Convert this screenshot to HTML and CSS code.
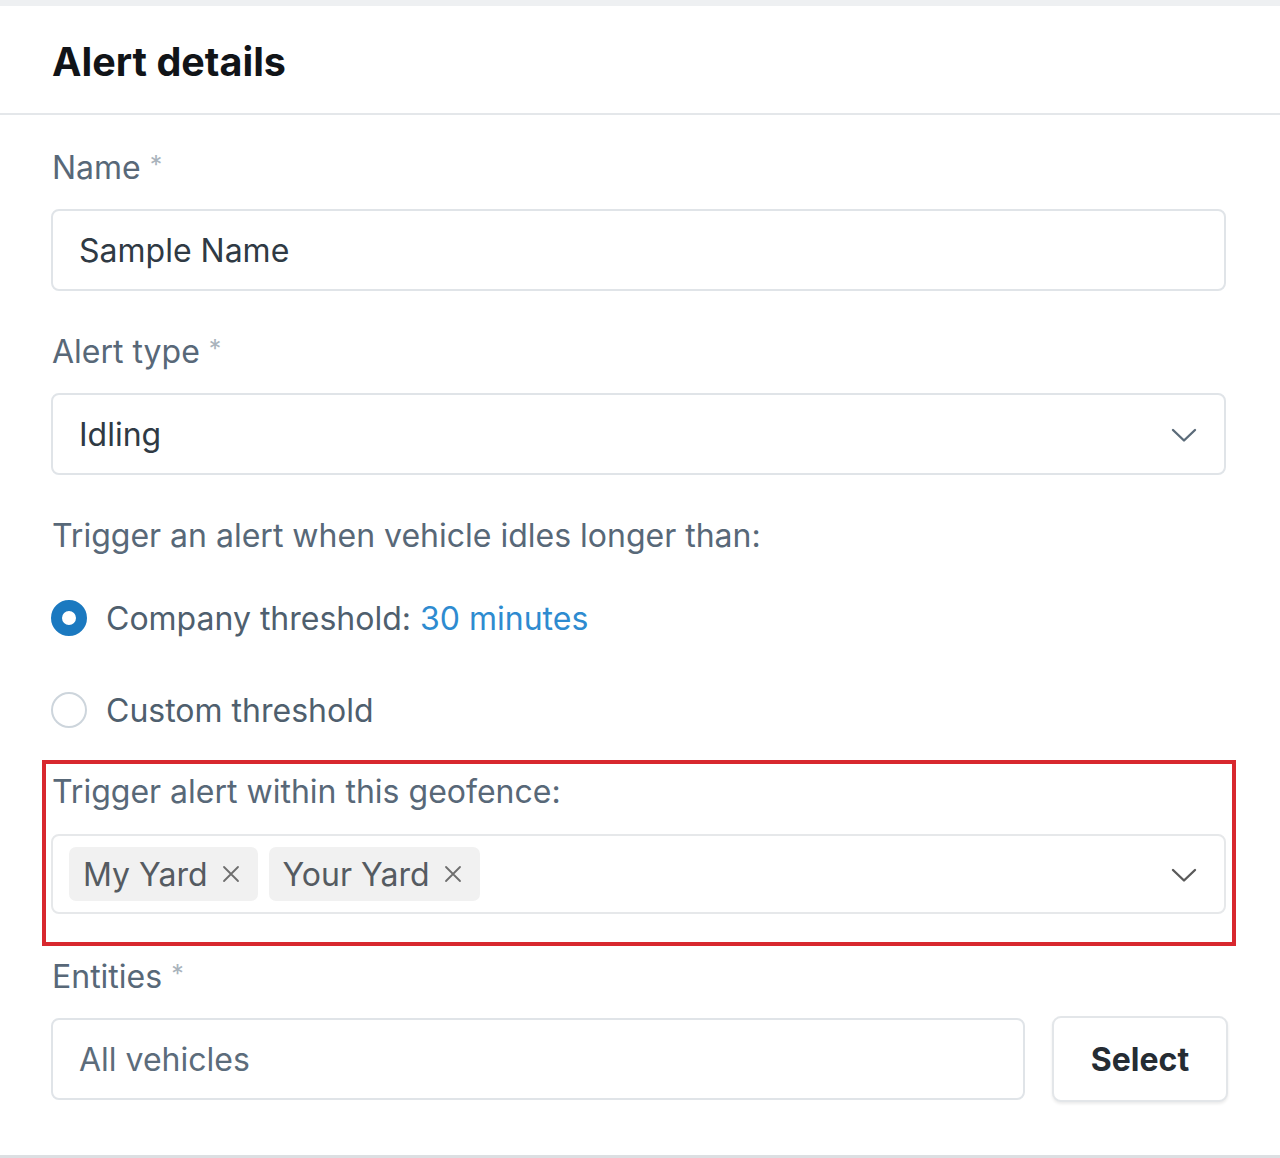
FILE: index.html
```html
<!DOCTYPE html>
<html>
<head>
<meta charset="utf-8">
<link rel="stylesheet" href="styles.css">
</head>
<body>
<div class="page">
  <div class="topstrip"></div>
  <div class="header"><h1 class="title">Alert details</h1></div>
  <div class="content">
    <div class="label label-name">Name <span class="req">*</span></div>
    <div class="field"><span class="value">Sample Name</span></div>

    <div class="label label-gap">Alert type <span class="req">*</span></div>
    <div class="field field-select">
      <span class="value">Idling</span>
      <svg class="chev" width="26" height="15" viewBox="0 0 26 15"><path d="M2 2 L13 12.5 L24 2" fill="none" stroke="#5b6b79" stroke-width="2.4" stroke-linecap="round" stroke-linejoin="round"/></svg>
    </div>

    <div class="label label-gap">Trigger an alert when vehicle idles longer than:</div>

    <div class="radio-row radio-first">
      <span class="radio radio-on"></span>
      <span class="radio-text">Company threshold: <span class="link">30 minutes</span></span>
    </div>
    <div class="radio-row radio-second">
      <span class="radio"></span>
      <span class="radio-text">Custom threshold</span>
    </div>

    <div class="highlight">
      <div class="label">Trigger alert within this geofence:</div>
      <div class="field field-multi">
        <div class="tags">
          <span class="tag">My Yard <svg class="x" width="18" height="18" viewBox="0 0 18 18"><path d="M2 2 L16 16 M16 2 L2 16" stroke="#6e6e6e" stroke-width="1.8" stroke-linecap="round"/></svg></span>
          <span class="tag">Your Yard <svg class="x" width="18" height="18" viewBox="0 0 18 18"><path d="M2 2 L16 16 M16 2 L2 16" stroke="#6e6e6e" stroke-width="1.8" stroke-linecap="round"/></svg></span>
        </div>
        <svg class="chev" width="26" height="15" viewBox="0 0 26 15"><path d="M2 2 L13 12.5 L24 2" fill="none" stroke="#5a5a5a" stroke-width="2.4" stroke-linecap="round" stroke-linejoin="round"/></svg>
      </div>
    </div>

    <div class="label label-entities">Entities <span class="req">*</span></div>
    <div class="entities-row">
      <div class="field field-grow"><span class="value value-muted">All vehicles</span></div>
      <button class="btn">Select</button>
    </div>
  </div>
  <div class="bottomline"></div>
</div>
</body>
</html>
```

FILE: styles.css
```css
html, body {
  margin: 0;
  padding: 0;
  background: #ffffff;
}
body {
  font-family: Inter, "Noto Sans", "Liberation Sans", sans-serif;
  color: #2f3a44;
}
.page {
  width: 1280px;
  height: 1158px;
  display: flex;
  flex-direction: column;
  overflow: hidden;
}
.topstrip {
  height: 6px;
  background: #eef0f2;
}
.header {
  height: 109px;
  border-bottom: 2px solid #e4e7ea;
  display: flex;
  align-items: center;
  padding-left: 52px;
  box-sizing: border-box;
}
.title {
  margin: 0;
  font-size: 39.5px;
  font-weight: 700;
  color: #111418;
  padding-top: 5px;
}
.content {
  padding: 0 54px 0 51px;
  flex: 1;
  display: flex;
  flex-direction: column;
}
.label {
  font-size: 32px;
  line-height: 36px;
  color: #586878;
  padding-left: 1px;
}
.req {
  color: #a9b3bc;
  font-size: 25px;
  line-height: 0;
  vertical-align: 5px;
}
.label-name {
  margin-top: 35px;
  margin-bottom: 23px;
}
.label-gap {
  margin-top: 43px;
  margin-bottom: 23px;
}
.field {
  height: 82px;
  box-sizing: border-box;
  border: 2px solid #e0e4e8;
  border-radius: 8px;
  display: flex;
  align-items: center;
  padding-left: 26px;
  padding-right: 27px;
}
.value {
  font-size: 32px;
  color: #2f3a44;
}
.value-muted {
  color: #5c6c7b;
}
.field-select {
  justify-content: space-between;
}
.chev {
  display: block;
  margin-top: 3px;
}
.radio-row {
  display: flex;
  align-items: center;
  height: 36px;
}
.radio-first {
  margin-top: 23px;
}
.radio-second {
  margin-top: 56px;
}
.radio {
  width: 36px;
  height: 36px;
  box-sizing: border-box;
  border-radius: 50%;
  border: 2px solid #cdd5dc;
  background: #fff;
  flex: none;
}
.radio-on {
  border: 11px solid #1b79c0;
}
.radio-text {
  margin-left: 19px;
  font-size: 32px;
  color: #4f5f6e;
}
.link {
  color: #2e8bd0;
}
.highlight {
  margin: 32px -10px 0 -9px;
  border: 4px solid #d8282e;
  padding: 10px 6px 28px 5px;
}
.highlight .label {
  margin-bottom: 24px;
  padding-left: 1px;
}
.field-multi {
  height: 80px;
  padding-left: 16px;
  justify-content: space-between;
  border-color: #e6e8ea;
}
.tags {
  display: flex;
  gap: 11px;
}
.tag {
  height: 54px;
  display: flex;
  align-items: center;
  background: #f1f1f1;
  border-radius: 7px;
  padding: 0 18px 0 14px;
  font-size: 32px;
  color: #555b61;
}
.x {
  display: block;
  margin-left: 14px;
}
.label-entities {
  margin-top: 13px;
  margin-bottom: 21px;
}
.entities-row {
  display: flex;
  align-items: center;
  gap: 27px;
}
.field-grow {
  flex: 1;
}
.btn {
  width: 176px;
  height: 86px;
  margin-right: -2px;
  border: 2px solid #e3e6e9;
  border-radius: 9px;
  background: #fff;
  box-shadow: 0 2px 3px rgba(0,0,0,0.08);
  font-family: Inter, "Noto Sans", "Liberation Sans", sans-serif;
  font-size: 32px;
  font-weight: 700;
  color: #252c33;
  cursor: pointer;
}
.bottomline {
  height: 3px;
  background: #dcdfe2;
  margin-top: auto;
}
```
